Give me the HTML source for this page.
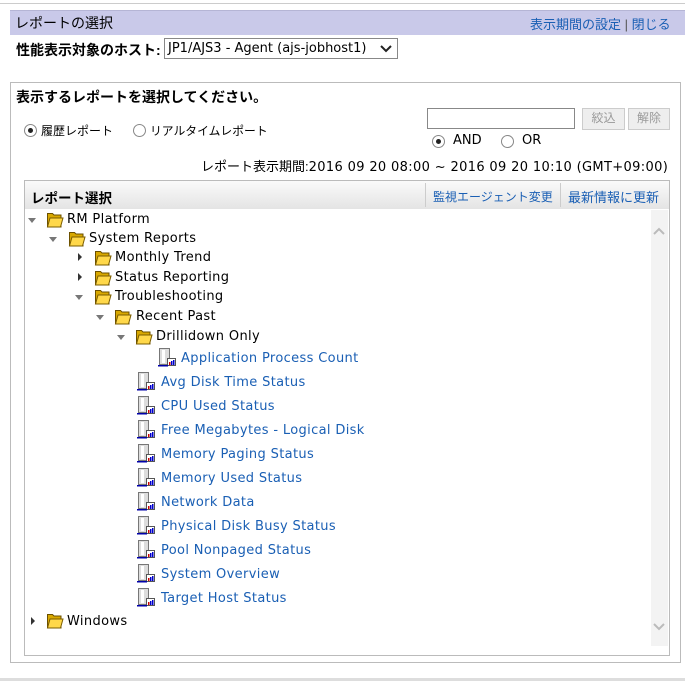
<!DOCTYPE html>
<html><head><meta charset="utf-8"><style>
body{margin:0;width:685px;height:683px;background:#fff;position:relative;overflow:hidden;font-family:"DejaVu Sans","Liberation Sans","Noto Sans CJK JP",sans-serif;font-size:13px;color:#000}
.a{position:absolute;white-space:nowrap}
.tx{letter-spacing:0.35px}
.j{font-family:"Liberation Sans","Noto Sans CJK JP",sans-serif}
.lk{color:#1a5fb4}
.t{position:absolute;width:0;height:0}
.tr{border-left:4px solid #333;border-top:4px solid transparent;border-bottom:4px solid transparent}
.td{border-top:5px solid #777;border-left:4px solid transparent;border-right:4px solid transparent}
.rad{position:absolute;width:11px;height:11px;border:1px solid #888;border-radius:50%;background:#fff}
.rad.on::after{content:"";position:absolute;left:3px;top:3px;width:5px;height:5px;border-radius:50%;background:#222}
</style></head><body>
<div class="a" style="left:0;top:3px;width:685px;height:1px;background:#ccc"></div>
<div class="a" style="left:10px;top:10px;width:675px;height:24px;background:#c9c9e9;border-top:1px solid #b5b5d5"></div>
<div class="a j" style="left:15px;top:13px;font-size:14px">レポートの選択</div>
<div class="a j lk" style="left:530px;top:14px;font-size:13px">表示期間の設定 <span style="color:#555">|</span> 閉じる</div>
<div class="a j" style="left:16px;top:40px;font-weight:bold;font-size:14px">性能表示対象のホスト:</div>
<div class="a" style="left:164px;top:38px;height:21px;border:1px solid #888;font-size:13px;line-height:20px;padding-left:3px;box-sizing:border-box;width:234px">JP1/AJS3 - Agent (ajs-jobhost1)</div>
<svg class="a" style="left:380px;top:44px" width="12" height="9"><path d="M1 2l5 5 5-5" fill="none" stroke="#222" stroke-width="2"/></svg>
<div class="a" style="left:10px;top:82px;width:671px;height:581px;border:1px solid #bbb;box-sizing:border-box"></div>
<div class="a j" style="left:16px;top:87px;font-weight:bold;font-size:14px">表示するレポートを選択してください。</div>
<div class="rad on" style="left:24px;top:124px"></div><div class="a j" style="left:41px;top:122px;font-size:12px">履歴レポート</div>
<div class="rad" style="left:133px;top:124px"></div><div class="a j" style="left:150px;top:122px;font-size:11.8px">リアルタイムレポート</div>
<div class="a" style="left:427px;top:108px;width:148px;height:21px;border:1px solid #888;box-sizing:border-box"></div>
<div class="a j" style="left:582px;top:108px;width:41px;height:20px;border:1px solid #ccc;background:#eee;color:#999;text-align:center;line-height:19px;font-size:12px">絞込</div>
<div class="a j" style="left:628px;top:108px;width:40px;height:20px;border:1px solid #ccc;background:#eee;color:#999;text-align:center;line-height:19px;font-size:12px">解除</div>
<div class="rad on" style="left:432px;top:135px"></div><div class="a" style="left:453px;top:133px">AND</div>
<div class="rad" style="left:501px;top:135px"></div><div class="a" style="left:522px;top:133px">OR</div>
<div class="a j" style="left:201px;top:156px;font-size:13px">レポート表示期間:<span class="tx" style="font-family:'DejaVu Sans',sans-serif;font-size:13px">2016 09 20 08:00 ~ 2016 09 20 10:10 (GMT+09:00)</span></div>
<div class="a" style="left:24px;top:180px;width:646px;height:476px;border:1px solid #bbb;box-sizing:border-box"></div>
<div class="a" style="left:25px;top:181px;width:644px;height:28px;background:linear-gradient(#fafafa,#e4e4e4)"></div>
<div class="a j" style="left:31px;top:187px;font-weight:bold;font-size:13.5px">レポート選択</div>
<div class="a" style="left:425px;top:183px;width:1px;height:24px;background:#ccc"></div>
<div class="a" style="left:560px;top:183px;width:1px;height:24px;background:#ccc"></div>
<div class="a j lk" style="left:433px;top:188px;font-size:12px">監視エージェント変更</div>
<div class="a j lk" style="left:568px;top:187px;font-size:13px">最新情報に更新</div>
<div class="a" style="left:651px;top:210px;width:17px;height:436px;background:#f3f3f3"></div>
<svg class="a" style="left:652px;top:226px" width="14" height="10"><path d="M2 8l5-5 5 5" fill="none" stroke="#bbb" stroke-width="2"/></svg>
<svg class="a" style="left:652px;top:622px" width="14" height="10"><path d="M2 2l5 5 5-5" fill="none" stroke="#bbb" stroke-width="2"/></svg>
<div class="a" style="left:0;top:678px;width:685px;height:3px;background:#ddd"></div>
<svg width="0" height="0" style="position:absolute"><defs>
<g id="f"><path d="M1.5 2.5h5l1.5 1.5h7v12h-13.5z" fill="#d8a800" stroke="#6b5000"/><path d="M4 7h13l-2.5 9h-13z" fill="#ffd84a" stroke="#7a5c00"/></g>
<g id="r"><rect x="2.5" y="1.5" width="10" height="16" fill="#ddd" stroke="#777"/><rect x="5" y="3" width="3" height="13" fill="#fff"/><rect x="10.5" y="11.5" width="8" height="7" fill="#fff" stroke="#555"/><rect x="12" y="15" width="1.5" height="3" fill="#c00"/><rect x="14" y="14" width="1.5" height="4" fill="#00c"/><rect x="16" y="13" width="1.5" height="5" fill="#00c"/><rect x="1" y="18" width="10" height="1.5" fill="#00a"/></g>
</defs></svg>
<div class="tx">
<div class="t td" style="left:28px;top:218px"></div><svg class="a" style="left:46px;top:211px" width="18" height="18"><use href="#f"/></svg><div class="a" style="left:67px;top:212px">RM Platform</div>
<div class="t td" style="left:49px;top:237px"></div><svg class="a" style="left:68px;top:230px" width="18" height="18"><use href="#f"/></svg><div class="a" style="left:89px;top:231px">System Reports</div>
<div class="t tr" style="left:78px;top:253px"></div><svg class="a" style="left:94px;top:249px" width="18" height="18"><use href="#f"/></svg><div class="a" style="left:115px;top:250px">Monthly Trend</div>
<div class="t tr" style="left:78px;top:273px"></div><svg class="a" style="left:94px;top:269px" width="18" height="18"><use href="#f"/></svg><div class="a" style="left:115px;top:270px">Status Reporting</div>
<div class="t td" style="left:75px;top:295px"></div><svg class="a" style="left:94px;top:288px" width="18" height="18"><use href="#f"/></svg><div class="a" style="left:115px;top:289px">Troubleshooting</div>
<div class="t td" style="left:96px;top:315px"></div><svg class="a" style="left:114px;top:308px" width="18" height="18"><use href="#f"/></svg><div class="a" style="left:136px;top:309px">Recent Past</div>
<div class="t td" style="left:117px;top:335px"></div><svg class="a" style="left:135px;top:328px" width="18" height="18"><use href="#f"/></svg><div class="a" style="left:156px;top:329px">Drillidown Only</div>
<svg class="a" style="left:157px;top:347px" width="20" height="20"><use href="#r"/></svg><div class="a lk" style="left:181px;top:351px">Application Process Count</div>
<svg class="a" style="left:136px;top:371px" width="20" height="20"><use href="#r"/></svg><div class="a lk" style="left:161px;top:375px">Avg Disk Time Status</div>
<svg class="a" style="left:136px;top:395px" width="20" height="20"><use href="#r"/></svg><div class="a lk" style="left:161px;top:399px">CPU Used Status</div>
<svg class="a" style="left:136px;top:419px" width="20" height="20"><use href="#r"/></svg><div class="a lk" style="left:161px;top:423px">Free Megabytes - Logical Disk</div>
<svg class="a" style="left:136px;top:443px" width="20" height="20"><use href="#r"/></svg><div class="a lk" style="left:161px;top:447px">Memory Paging Status</div>
<svg class="a" style="left:136px;top:467px" width="20" height="20"><use href="#r"/></svg><div class="a lk" style="left:161px;top:471px">Memory Used Status</div>
<svg class="a" style="left:136px;top:491px" width="20" height="20"><use href="#r"/></svg><div class="a lk" style="left:161px;top:495px">Network Data</div>
<svg class="a" style="left:136px;top:515px" width="20" height="20"><use href="#r"/></svg><div class="a lk" style="left:161px;top:519px">Physical Disk Busy Status</div>
<svg class="a" style="left:136px;top:539px" width="20" height="20"><use href="#r"/></svg><div class="a lk" style="left:161px;top:543px">Pool Nonpaged Status</div>
<svg class="a" style="left:136px;top:563px" width="20" height="20"><use href="#r"/></svg><div class="a lk" style="left:161px;top:567px">System Overview</div>
<svg class="a" style="left:136px;top:587px" width="20" height="20"><use href="#r"/></svg><div class="a lk" style="left:161px;top:591px">Target Host Status</div>
<div class="t tr" style="left:31px;top:617px"></div><svg class="a" style="left:46px;top:612px" width="18" height="18"><use href="#f"/></svg><div class="a" style="left:67px;top:614px">Windows</div>
</div>
</body></html>
